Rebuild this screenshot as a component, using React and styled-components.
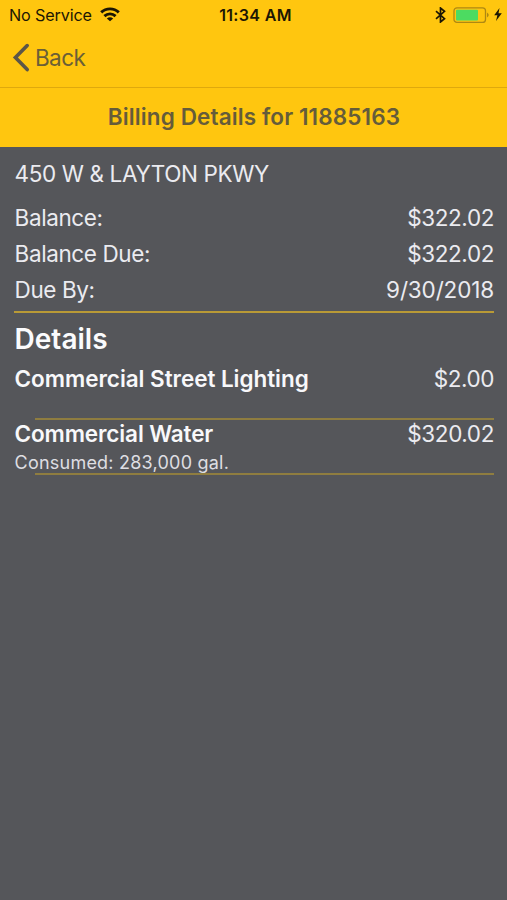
import styled, { createGlobalStyle } from 'styled-components'

const GlobalStyle = createGlobalStyle`
    * {
        box-sizing: border-box;
    }

    body {
        margin: 0;
        background-color: #55565a;
        font-family: Inter, "Liberation Sans", sans-serif;
    }
`

const Screen = styled.main`
    width: 507px;
    height: 900px;
    overflow: hidden;
    background-color: #55565a;
    color: #ebebf0;
`

const NavHeader = styled.header`
    height: 88px;
    background-color: #ffc60f;
    border-bottom: 1px solid #dfa90d;
`

const StatusBar = styled.div`
    display: grid;
    grid-template-columns: 1fr auto 1fr;
    align-items: center;
    height: 29px;
    padding: 0 5px 0 9px;
    color: #1c1704;
`

const StatusGroup = styled.div`
    display: flex;
    align-items: center;
    justify-content: ${props => props.$end ? 'flex-end' : 'flex-start'};
`

const Text = styled.span`
    font-size: ${props => props.$size || 22.5}px;
    font-weight: ${props => props.$weight || 400};
    letter-spacing: ${props => props.$spacing || 0}px;
    white-space: nowrap;
`

const WifiIcon = styled.svg`
    width: 20px;
    height: 15px;
    margin-left: 8px;
`

const BluetoothIcon = styled.svg`
    width: 11px;
    height: 16px;
    margin-right: 7px;
`

const BatteryIcon = styled.svg`
    width: 37px;
    height: 18px;
`

const BoltIcon = styled.svg`
    width: 8px;
    height: 13px;
    margin-left: 4px;
`

const BackButton = styled.button`
    display: flex;
    align-items: center;
    height: 57px;
    padding: 0 0 0 11px;
    border: none;
    background: none;
    color: #6b5f37;
    font-family: inherit;
`

const BackIcon = styled.svg`
    width: 20px;
    height: 30px;
    margin-right: 4px;
    color: #5c5648;
`

const TitleBar = styled.div`
    display: flex;
    align-items: center;
    justify-content: center;
    height: 59px;
    padding: 0 0 2px 1px;
    background-color: #ffc60f;
    color: #655c3a;
`

const Content = styled.section`
    padding: 8px 13px 0 14px;
`

const Row = styled.div`
    display: flex;
    align-items: center;
    justify-content: space-between;
    height: ${props => props.$height}px;
    padding-left: 0.6px;
`

const Summary = styled.div`
    padding: 8px 0 4px;
    border-bottom: 2px solid #b99a36;
`

const Heading = styled.h2`
    display: flex;
    align-items: center;
    height: 52px;
    margin: 0;
    padding-left: 0.6px;
    color: #fbfbfd;
`

const Item = styled.div`
    height: 53px;
`

const Name = styled(Text)`
    color: #f8f8fa;
    font-weight: 600;
`

const Consumed = styled.div`
    display: flex;
    align-items: center;
    height: 33px;
    padding-left: 0.6px;
    color: #dedee2;
`

const Separator = styled.div`
    height: 2px;
    margin-left: 21px;
    background-color: #8f7d40;
`

const summary = [
    { label: 'Balance:', value: '$322.02', spacing: -0.4 },
    { label: 'Balance Due:', value: '$322.02', spacing: -0.4 },
    { label: 'Due By:', value: '9/30/2018', spacing: -0.15 },
]

const App = () => {
    return (
        <>
            <GlobalStyle />
            <Screen>
                <NavHeader>
                    <StatusBar>
                        <StatusGroup>
                            <Text $size={16.2} $spacing={-0.15}>No Service</Text>
                            <WifiIcon viewBox="0 0 20 15" fill="none" stroke="currentColor" strokeWidth="2.9">
                                <path d="M1.2 5.4C6.1.7 13.9.7 18.8 5.4" />
                                <path d="M4.4 9.1C7.6 6.1 12.4 6.1 15.6 9.1" />
                                <path d="M10 14.2 6.8 11.4Q10 9 13.2 11.4Z" fill="currentColor" stroke="none" />
                            </WifiIcon>
                        </StatusGroup>
                        <Text $size={16} $weight={600} $spacing={0.35}>11:34 AM</Text>
                        <StatusGroup $end>
                            <BluetoothIcon viewBox="0 0 11 16" fill="none" stroke="currentColor" strokeWidth="1.7">
                                <path d="M1 4.2 9.5 11.7 5.5 15V1L9.5 4.3 1 11.8" />
                            </BluetoothIcon>
                            <BatteryIcon viewBox="0 0 37 18">
                                <rect x="1" y="1.8" width="31.5" height="14.6" rx="3" fill="none" stroke="#ae8813" strokeWidth="1.3" />
                                <rect x="3" y="3.8" width="22" height="10.6" rx="1" fill="#4cdb61" />
                                <path d="M34 6.5Q37.5 9 34 11.5Z" fill="#ae8813" />
                            </BatteryIcon>
                            <BoltIcon viewBox="0 0 8 13">
                                <path d="M5.5 0 .2 7.3H3.4L2 13 7.8 5.3H4.5Z" fill="currentColor" />
                            </BoltIcon>
                        </StatusGroup>
                    </StatusBar>
                    <BackButton>
                        <BackIcon viewBox="0 0 20 30" fill="none" stroke="currentColor" strokeWidth="3.6" strokeLinecap="round" strokeLinejoin="miter">
                            <path d="M16.2 2.6 4.4 14.6 16.2 26.6" />
                        </BackIcon>
                        <Text $spacing={-0.6}>Back</Text>
                    </BackButton>
                </NavHeader>
                <TitleBar>
                    <Text $weight={600} $spacing={0.12}>Billing Details for 11885163</Text>
                </TitleBar>
                <Content>
                    <Row $height={36}>
                        <Text $spacing={-0.38}>450 W &amp; LAYTON PKWY</Text>
                    </Row>
                    <Summary>
                        {summary.map(row => (
                            <Row $height={36} key={row.label}>
                                <Text $spacing={-0.4}>{row.label}</Text>
                                <Text $spacing={row.spacing}>{row.value}</Text>
                            </Row>
                        ))}
                    </Summary>
                    <Heading>
                        <Text $size={28} $weight={600} $spacing={0}>Details</Text>
                    </Heading>
                    <Item>
                        <Row $height={26}>
                            <Name $spacing={-0.05}>Commercial Street Lighting</Name>
                            <Text $spacing={-0.45}>$2.00</Text>
                        </Row>
                    </Item>
                    <Separator />
                    <Item>
                        <Row $height={26}>
                            <Name $spacing={-0.13}>Commercial Water</Name>
                            <Text $spacing={-0.4}>$320.02</Text>
                        </Row>
                        <Consumed>
                            <Text $size={18} $spacing={0.22}>Consumed: 283,000 gal.</Text>
                        </Consumed>
                    </Item>
                    <Separator />
                </Content>
            </Screen>
        </>
    )
}

export default App
